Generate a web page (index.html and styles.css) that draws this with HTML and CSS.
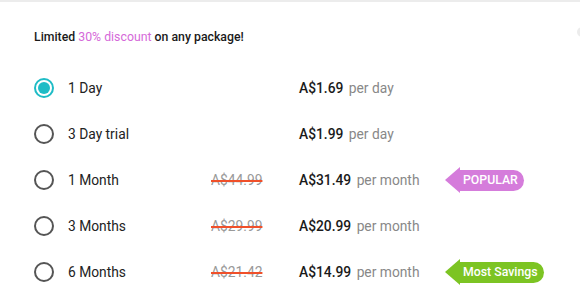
FILE: index.html
```html
<!DOCTYPE html>
<html lang="en">
<head>
    <meta charset="UTF-8">
    <meta name="viewport" content="width=device-width, initial-scale=1.0">
    <title>Choose a package</title>
    <link rel="stylesheet" href="styles.css">
</head>
<body>
    <div class="panel">
        <span class="close-edge"></span>
        <h1 class="offer">Limited <span class="offer-hl">30% discount</span> on any package!</h1>
        <div class="plans">
            <label class="plan">
                <span class="radio checked"></span>
                <span class="plan-name">1 Day</span>
                <span class="plan-old"></span>
                <span class="plan-price"><b>A$1.69</b> per day</span>
            </label>
            <label class="plan">
                <span class="radio"></span>
                <span class="plan-name">3 Day trial</span>
                <span class="plan-old"></span>
                <span class="plan-price"><b>A$1.99</b> per day</span>
            </label>
            <label class="plan">
                <span class="radio"></span>
                <span class="plan-name">1 Month</span>
                <span class="plan-old"><s>A$44.99</s></span>
                <span class="plan-price"><b>A$31.49</b> per month</span>
                <span class="tag tag-popular">POPULAR</span>
            </label>
            <label class="plan">
                <span class="radio"></span>
                <span class="plan-name">3 Months</span>
                <span class="plan-old"><s>A$29.99</s></span>
                <span class="plan-price"><b>A$20.99</b> per month</span>
            </label>
            <label class="plan">
                <span class="radio"></span>
                <span class="plan-name">6 Months</span>
                <span class="plan-old"><s>A$21.42</s></span>
                <span class="plan-price"><b>A$14.99</b> per month</span>
                <span class="tag tag-savings">Most Savings</span>
            </label>
        </div>
    </div>
</body>
</html>
```

FILE: styles.css
```css
body {
    margin: 0;
    font-family: Roboto, "Liberation Sans", Arial, sans-serif;
    background: #fff;
    color: #222;
}
.panel {
    position: relative;
    height: 302px;
    box-sizing: border-box;
    border-top: 2px solid #ececec;
    padding: 26px 0 0 34px;
    overflow: hidden;
}
.close-edge {
    position: absolute;
    top: 25px;
    right: -7px;
    width: 10px;
    height: 10px;
    border-radius: 50%;
    background: #ececec;
}
.offer {
    margin: 0;
    font-size: 12.3px;
    font-weight: 500;
    line-height: 18px;
    color: #1a1a1a;
}
.offer-hl {
    font-weight: 400;
    color: #d569d9;
}
.plans {
    margin-top: 19px;
}
.plan {
    display: flex;
    align-items: center;
    height: 46px;
    font-size: 13.8px;
}
.radio {
    width: 16px;
    height: 16px;
    border: 2px solid #555;
    border-radius: 50%;
    margin-right: 14px;
    box-sizing: content-box;
    flex: none;
    position: relative;
}
.radio.checked {
    border-color: #1fbcc6;
}
.radio.checked::after {
    content: "";
    position: absolute;
    left: 2px;
    top: 2px;
    width: 12px;
    height: 12px;
    border-radius: 50%;
    background: #1fbcc6;
}
.plan-name {
    width: 143px;
    color: #222;
}
.plan-old {
    width: 88px;
    color: #999;
}
.plan-old s {
    text-decoration-color: #f0502a;
    text-decoration-thickness: 2px;
}
.plan-price {
    width: 146px;
    color: #888;
}
.plan-price b {
    font-weight: 500;
    color: #1a1a1a;
    margin-right: 2px;
}
.tag {
    position: relative;
    margin-left: 15px;
    height: 21px;
    line-height: 21px;
    padding: 0 6px 0 3px;
    border-radius: 0 11px 11px 0;
    color: #fff;
    font-size: 12.3px;
    font-weight: 500;
}
.tag::before {
    content: "";
    position: absolute;
    left: -15px;
    top: -3px;
    border-top: 13px solid transparent;
    border-bottom: 13px solid transparent;
    border-right: 15px solid;
}
.tag-popular {
    background: #d57cdb;
}
.tag-popular::before {
    border-right-color: #d57cdb;
}
.tag-savings {
    background: #7cc423;
}
.tag-savings::before {
    border-right-color: #7cc423;
}
```
